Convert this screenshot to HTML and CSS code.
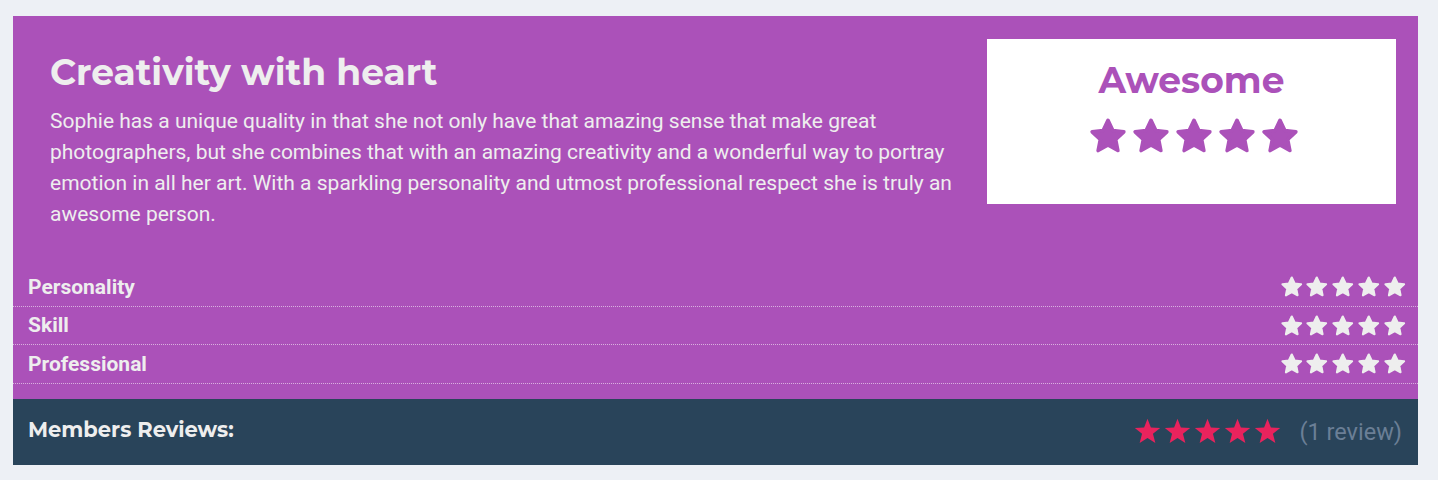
FILE: index.html
```html
<!DOCTYPE html>
<html>
<head>
<meta charset="utf-8">
<link rel="stylesheet" href="styles.css">
</head>
<body>
<svg class="defs" width="0" height="0" aria-hidden="true">
  <symbol id="star" viewBox="0 0 24 24">
    <polygon points="12,2.6 14.9,8.7 21.5,9.5 16.6,14.1 17.9,20.7 12,17.4 6.1,20.7 7.4,14.1 2.5,9.5 9.1,8.7" fill="currentColor" stroke="currentColor" stroke-width="2.2" stroke-linejoin="round"/>
  </symbol>
  <symbol id="star-sharp" viewBox="0 0 24 24">
    <polygon points="12,1.5 14.8,8.6 22.5,9 16.5,13.9 18.5,21.5 12,17.3 5.5,21.5 7.5,13.9 1.5,9 9.2,8.6" fill="currentColor"/>
  </symbol>
</svg>
<div class="card">
  <div class="top">
    <div class="intro">
      <h1 class="title">Creativity with heart</h1>
      <p class="text">Sophie has a unique quality in that she not only have that amazing sense that make great photographers, but she combines that with an amazing creativity and a wonderful way to portray emotion in all her art. With a sparkling personality and utmost professional respect she is truly an awesome person.</p>
    </div>
    <div class="verdict">
      <div class="verdict-label">Awesome</div>
      <div class="stars stars-big">
        <svg><use href="#star"/></svg><svg><use href="#star"/></svg><svg><use href="#star"/></svg><svg><use href="#star"/></svg><svg><use href="#star"/></svg>
      </div>
    </div>
  </div>
  <div class="criteria">
    <div class="row">
      <span class="row-label">Personality</span>
      <span class="stars stars-row"><svg><use href="#star"/></svg><svg><use href="#star"/></svg><svg><use href="#star"/></svg><svg><use href="#star"/></svg><svg><use href="#star"/></svg></span>
    </div>
    <div class="row">
      <span class="row-label">Skill</span>
      <span class="stars stars-row"><svg><use href="#star"/></svg><svg><use href="#star"/></svg><svg><use href="#star"/></svg><svg><use href="#star"/></svg><svg><use href="#star"/></svg></span>
    </div>
    <div class="row">
      <span class="row-label">Professional</span>
      <span class="stars stars-row"><svg><use href="#star"/></svg><svg><use href="#star"/></svg><svg><use href="#star"/></svg><svg><use href="#star"/></svg><svg><use href="#star"/></svg></span>
    </div>
  </div>
  <div class="members">
    <span class="members-label">Members Reviews:</span>
    <div class="members-right">
      <span class="stars stars-red"><svg><use href="#star-sharp"/></svg><svg><use href="#star-sharp"/></svg><svg><use href="#star-sharp"/></svg><svg><use href="#star-sharp"/></svg><svg><use href="#star-sharp"/></svg></span>
      <span class="count">(1 review)</span>
    </div>
  </div>
</div>
</body>
</html>
```
FILE: styles.css
```css
html, body {
  margin: 0;
  padding: 0;
}
body {
  background: #edf0f5;
  padding: 16px 20px 15px 13px;
  font-family: Roboto, "Liberation Sans", sans-serif;
}
.defs {
  position: absolute;
  width: 0;
  height: 0;
  overflow: hidden;
}
.card {
  background: #ab51b9;
  color: #eeeeee;
}
.top {
  display: flex;
  align-items: flex-start;
  justify-content: space-between;
  padding: 23px 22px 0 37px;
}
.intro {
  width: 910px;
  padding-top: 13px;
}
.title {
  margin: 0;
  font-family: Montserrat, "Open Sans", "Liberation Sans", sans-serif;
  font-weight: 700;
  font-size: 36px;
  line-height: 40px;
  color: #eeeeee;
}
.text {
  margin: 14px 0 0;
  font-size: 21px;
  line-height: 31px;
  color: #eeeeee;
  padding-bottom: 38px;
}
.verdict {
  width: 409px;
  height: 165px;
  background: #ffffff;
  display: flex;
  flex-direction: column;
  align-items: center;
  box-sizing: border-box;
  padding-top: 19px;
}
.verdict-label {
  font-family: Montserrat, "Open Sans", "Liberation Sans", sans-serif;
  font-weight: 700;
  font-size: 36px;
  line-height: 44px;
  color: #ab51b9;
}
.stars {
  display: flex;
}
.stars-big {
  margin-top: 14px;
  gap: 3px;
  color: #ab51b9;
  margin-left: 4px;
}
.stars-big svg {
  width: 40px;
  height: 40px;
}
.criteria {
  padding-bottom: 15px;
}
.row {
  display: flex;
  align-items: center;
  justify-content: space-between;
  height: 37.6px;
  padding: 0 12px 0 15px;
  border-bottom: 1px dotted rgba(255, 255, 255, 0.55);
}
.row-label {
  font-size: 21px;
  font-weight: 700;
  color: #eeeeee;
}
.stars-row {
  gap: 2.2px;
  color: #eeeeee;
}
.stars-row svg {
  width: 23.5px;
  height: 23.5px;
}
.members {
  background: #29445a;
  height: 66px;
  display: flex;
  align-items: center;
  justify-content: space-between;
  padding: 0 16px 0 15px;
}
.members-label {
  font-family: Montserrat, "Open Sans", "Liberation Sans", sans-serif;
  font-weight: 700;
  font-size: 21px;
  color: #eeeeee;
  margin-top: -4px;
}
.members-right {
  display: flex;
  align-items: center;
  gap: 17px;
}
.stars-red {
  gap: 1px;
  color: #e8235d;
}
.stars-red svg {
  width: 29px;
  height: 29px;
}
.count {
  font-size: 23.5px;
  color: #6b7f96;
}
```
